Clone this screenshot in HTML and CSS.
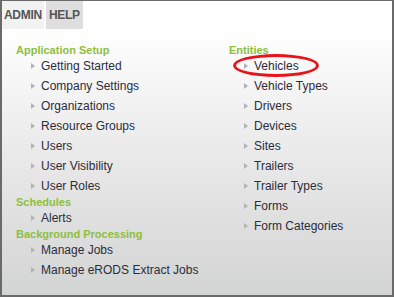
FILE: index.html
```html
<!DOCTYPE html>
<html>
<head>
<meta charset="utf-8">
<link rel="stylesheet" href="styles.css">
</head>
<body>
<div class="frame">
  <div class="tabs">
    <div class="tab tab-active">ADMIN</div>
    <div class="tab tab-help">HELP</div>
  </div>
  <div class="panel">
    <div class="col">
      <div class="group">Application Setup</div>
      <ul class="items">
        <li>Getting Started</li>
        <li>Company Settings</li>
        <li>Organizations</li>
        <li>Resource Groups</li>
        <li>Users</li>
        <li>User Visibility</li>
        <li>User Roles</li>
      </ul>
      <div class="group">Schedules</div>
      <ul class="items">
        <li>Alerts</li>
      </ul>
      <div class="group">Background Processing</div>
      <ul class="items">
        <li>Manage Jobs</li>
        <li>Manage eRODS Extract Jobs</li>
      </ul>
    </div>
    <div class="col">
      <div class="group">Entities</div>
      <ul class="items">
        <li class="circled">Vehicles<span class="ring"></span></li>
        <li>Vehicle Types</li>
        <li>Drivers</li>
        <li>Devices</li>
        <li>Sites</li>
        <li>Trailers</li>
        <li>Trailer Types</li>
        <li>Forms</li>
        <li>Form Categories</li>
      </ul>
    </div>
  </div>
</div>
</body>
</html>
```

FILE: styles.css
```css
html, body {
  margin: 0;
  padding: 0;
}
body {
  width: 394px;
  height: 297px;
  font-family: "Liberation Sans", Arial, sans-serif;
  overflow: hidden;
}
.frame {
  box-sizing: border-box;
  width: 394px;
  height: 297px;
  border-top: 1px solid #6a6a6a;
  border-left: 2px solid #6a6a6a;
  border-right: 2px solid #6a6a6a;
  border-bottom: 2px solid #6a6a6a;
  background: #ffffff;
  display: flex;
  flex-direction: column;
}
.tabs {
  display: flex;
  gap: 2px;
  height: 28px;
  flex: none;
}
.tab {
  font-size: 12px;
  font-weight: bold;
  color: #555;
  line-height: 28px;
  padding: 0 2px;
  letter-spacing: -0.3px;
}
.tab-active {
  background: #f2f2f2;
  width: 38px;
}
.tab-help {
  background: #dedede;
  width: 32px;
  padding: 0 2px 0 3px;
}
.panel {
  flex: 1;
  display: grid;
  grid-template-columns: 213px 1fr;
  padding: 12px 0 0 14px;
  background: linear-gradient(to bottom, #ffffff 0%, #f3f3f3 25%, #e4e4e4 60%, #d3d4d4 100%);
  margin-top: 1px;
}
.group {
  font-size: 11px;
  font-weight: bold;
  color: #8cc03c;
  line-height: 16px;
}
.items {
  list-style: none;
  margin: 0;
  padding: 0 0 0 25px;
}
.items li {
  position: relative;
  font-size: 12px;
  color: #2c2c3a;
  line-height: 16px;
}
.items li + li {
  margin-top: 4px;
}
.items li::before {
  content: "";
  position: absolute;
  left: -10px;
  top: 5px;
  border-left: 4px solid #b3b3b3;
  border-top: 3.5px solid transparent;
  border-bottom: 3.5px solid transparent;
}
.ring {
  position: absolute;
  left: -21px;
  top: -4px;
  width: 80px;
  height: 17px;
  border: 3px solid #e8141a;
  border-radius: 50%;
}
```
